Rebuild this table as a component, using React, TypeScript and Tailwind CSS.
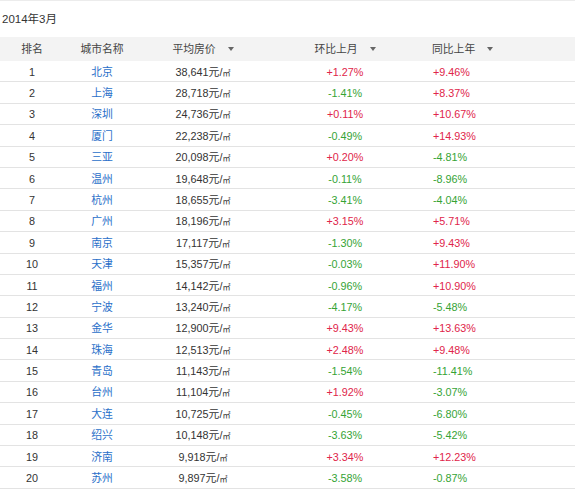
const rows: [string, string, string, string, string][] = [
  ['北京', '38,641', '+1.27%', '+9.46%'],
  ['上海', '28,718', '-1.41%', '+8.37%'],
  ['深圳', '24,736', '+0.11%', '+10.67%'],
  ['厦门', '22,238', '-0.49%', '+14.93%'],
  ['三亚', '20,098', '+0.20%', '-4.81%'],
  ['温州', '19,648', '-0.11%', '-8.96%'],
  ['杭州', '18,655', '-3.41%', '-4.04%'],
  ['广州', '18,196', '+3.15%', '+5.71%'],
  ['南京', '17,117', '-1.30%', '+9.43%'],
  ['天津', '15,357', '-0.03%', '+11.90%'],
  ['福州', '14,142', '-0.96%', '+10.90%'],
  ['宁波', '13,240', '-4.17%', '-5.48%'],
  ['金华', '12,900', '+9.43%', '+13.63%'],
  ['珠海', '12,513', '+2.48%', '+9.48%'],
  ['青岛', '11,143', '-1.54%', '-11.41%'],
  ['台州', '11,104', '+1.92%', '-3.07%'],
  ['大连', '10,725', '-0.45%', '-6.80%'],
  ['绍兴', '10,148', '-3.63%', '-5.42%'],
  ['济南', '9,918', '+3.34%', '+12.23%'],
  ['苏州', '9,897', '-3.58%', '-0.87%'],
].map((r, i) => [String(i + 1), ...r] as [string, string, string, string, string]);

const font = { fontFamily: '"Liberation Sans", "Noto Sans CJK SC", sans-serif' };

const Arrow = () => (
  <span className="ml-[12px] inline-block h-0 w-0 border-x-[3px] border-t-[4px] border-x-transparent border-t-[#666] align-middle" />
);

const pct = (v: string) => (v.startsWith('+') ? 'text-[#e0254a]' : 'text-[#35a335]');

const grid = 'grid grid-cols-[64px_76px_126px_158px_1fr] items-center';

export default function App() {
  return (
    <div className="h-[492px] w-[575px] overflow-hidden bg-white text-[10.8px] text-[#333]" style={font}>
      <div className="h-px bg-[#ececec]" />
      <div className="h-[36px] pl-[2px] pt-[9px] text-[11.5px] leading-[18px] text-[#333]">2014年3月</div>
      <div className={`${grid} h-[24px] bg-[#f3f3f3] text-[#444]`}>
        <div className="text-center">排名</div>
        <div className="text-center">城市名称</div>
        <div className="flex items-center justify-center">平均房价<Arrow /></div>
        <div className="flex items-center justify-center">环比上月<Arrow /></div>
        <div className="flex items-center pl-[8px]">同比上年<Arrow /></div>
      </div>
      {rows.map(([rank, city, price, mom, yoy]) => (
        <div key={rank} className={`${grid} h-[21.4px] border-b border-[#e3e3e3] pt-px`}>
          <div className="text-center">{rank}</div>
          <div className="text-center text-[#2a6fc9]">{city}</div>
          <div className="text-center">
            {price}元/<span className="text-[8px]">㎡</span>
          </div>
          <div className={`text-center ${pct(mom)}`}>{mom}</div>
          <div className={`pl-[9px] ${pct(yoy)}`}>{yoy}</div>
        </div>
      ))}
    </div>
  );
}
